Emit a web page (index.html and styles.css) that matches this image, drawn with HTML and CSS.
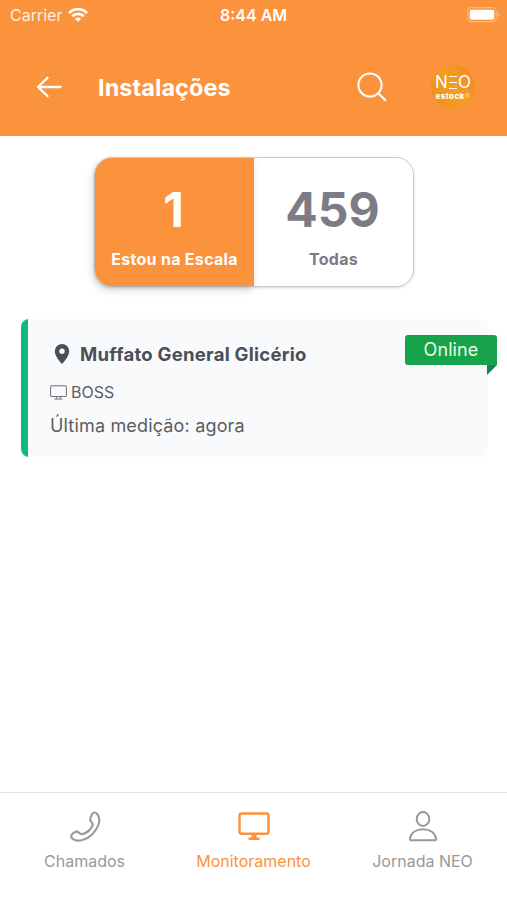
FILE: index.html
```html
<!doctype html>
<html lang="pt-BR">
<head>
  <meta charset="utf-8">
  <title>Instalações</title>
  <link rel="stylesheet" href="styles.css">
</head>
<body>
  <header class="header">
    <div class="status">
      <div class="carrier">
        <span>Carrier</span>
        <svg width="20" height="14" viewBox="0 0 20 14" fill="none" stroke="#fff" stroke-width="2.700">
          <path d="M1 5C6-.1 14-.1 19 5"/>
          <path d="M4.200 8.300c3.300-3.300 8.300-3.300 11.600 0"/>
          <path d="M10 13.800L6.900 10.700c1.700-1.700 4.500-1.700 6.200 0z" fill="#fff" stroke="none"/>
        </svg>
      </div>
      <span class="clock">8:44 AM</span>
      <svg class="battery" width="33" height="16" viewBox="0 0 33 16">
        <rect x=".7" y=".7" width="28.600" height="14" rx="4" fill="none" stroke="#fff" stroke-opacity=".35" stroke-width="1.200"/>
        <rect x="2.700" y="2.700" width="24.600" height="10" rx="2" fill="#fff"/>
        <path d="M31 5.500c1.600.6 1.600 4 0 4.600z" fill="#fff" fill-opacity=".4"/>
      </svg>
    </div>
    <div class="toolbar">
      <svg class="back" width="26" height="22" viewBox="0 0 26 22" fill="none" stroke="#fff" stroke-width="2.300" stroke-linecap="round" stroke-linejoin="round">
        <path d="M24.500 11H2M11.500 1.800L2 11l9.500 9.200"/>
      </svg>
      <h1 class="title">Instalações</h1>
      <svg class="search" width="30" height="30" viewBox="0 0 30 30" fill="none" stroke="#fff" stroke-width="2" stroke-linecap="round">
        <circle cx="13" cy="13" r="11.600"/>
        <path d="M21.300 21.300l7 7" stroke-width="2.300"/>
      </svg>
      <div class="avatar">
        <span class="neo">N<i class="bars"></i>O</span>
        <span class="brand">estock<b class="mark">®</b></span>
      </div>
    </div>
  </header>

  <main class="content">
    <div class="tabs">
      <div class="tab active">
        <span class="count">1</span>
        <span class="label">Estou na Escala</span>
      </div>
      <div class="tab">
        <span class="count">459</span>
        <span class="label">Todas</span>
      </div>
    </div>

    <section class="card">
      <h2 class="place">
        <svg width="16" height="20" viewBox="0 0 16 20">
          <path fill="#495057" fill-rule="evenodd" d="M8 0a7.200 7.200 0 0 1 7.200 7.200C15.200 11 11.600 16.200 8 20 4.400 16.200.8 11 .8 7.200A7.200 7.200 0 0 1 8 0zm0 4.500a2.700 2.700 0 1 0 0 5.400 2.700 2.700 0 0 0 0-5.400z"/>
        </svg>
        <span>Muffato General Glicério</span>
      </h2>
      <p class="device">
        <svg width="17" height="15" viewBox="0 0 17 15" fill="none" stroke="#6c6e72">
          <rect x=".6" y=".8" width="15.800" height="10.700" rx=".5"/>
          <path d="M4.500 14h8M6.500 13.500l.5-2M10.500 13.500l-.5-2"/>
        </svg>
        <span>BOSS</span>
      </p>
      <p class="reading">Última medição: agora</p>
      <span class="badge">Online</span>
    </section>
  </main>

  <nav class="nav">
    <a class="nav-item">
      <svg width="32" height="32" viewBox="0 0 32 32" fill="none" stroke="#999" stroke-width="2.100" stroke-linejoin="round">
        <path d="M23 4.200C24 2.200 26.300 2 28 3.800 30.300 6.500 31 10.500 29.300 15 27 21.500 21 28 13.500 30 9.500 31 5 30.500 3 28.300 1.300 26.500 2.500 24.300 5 22.700 6.800 21.500 8.300 21.200 9.700 22.500 11 23.800 12 24.600 14 24 18.500 22.500 22 19 23.500 15.500 24.400 13.300 23 12.500 21.800 11.300 20.300 9.800 21.500 7.200 23 4.200z"/>
      </svg>
      <span>Chamados</span>
    </a>
    <a class="nav-item current">
      <svg width="32" height="32" viewBox="0 0 32 32">
        <rect x="1.500" y="3.500" width="29" height="20.300" rx="2" fill="none" stroke="#fb923c" stroke-width="2.500"/>
        <path d="M13.500 24h5v3.500h3V30h-11v-2.500h3z" fill="#fb923c"/>
      </svg>
      <span>Monitoramento</span>
    </a>
    <a class="nav-item">
      <svg width="32" height="32" viewBox="0 0 32 32" fill="none" stroke="#999" stroke-width="2" stroke-linejoin="round">
        <ellipse cx="16" cy="9" rx="6.300" ry="6.900"/>
        <path d="M4.200 30.200h23.600c1 0 1.500-.6 1.300-1.500-1-5.700-6-9.400-13.100-9.400S3.900 23 2.900 28.700c-.2.900.3 1.500 1.300 1.500z"/>
      </svg>
      <span>Jornada NEO</span>
    </a>
  </nav>
</body>
</html>
```

FILE: styles.css
```css
* {
  box-sizing: border-box;
}

body {
  background: #fff;
  color: #495057;
  display: flex;
  flex-direction: column;
  font-family: Inter, 'Liberation Sans', sans-serif;
  height: 900px;
  margin: 0;
  width: 507px;
}

h1, h2, p {
  margin: 0;
}

svg {
  display: block;
  flex: none;
}

.header {
  background: #fb923c;
  color: #fff;
  height: 136px;
}

.status {
  align-items: center;
  display: grid;
  font-size: 16px;
  grid-template-columns: 1fr auto 1fr;
  height: 30px;
  padding: 0 7px 0 10px;
}

.carrier {
  align-items: center;
  color: #fff0e0;
  display: flex;
  gap: 6px;
}

.clock {
  font-weight: 600;
  margin-left: -3px;
}

.battery {
  justify-self: end;
  margin-top: -1px;
}

.toolbar {
  align-items: center;
  display: flex;
  height: 114px;
  padding: 0 32px 0 36px;
}

.title {
  flex: 1;
  font-size: 23.5px;
  font-weight: 700;
  letter-spacing: .05px;
  margin-left: 36px;
}

.avatar {
  align-items: center;
  background: linear-gradient(60deg, #ee8a1c, #f39e20 50%, #f3842a);
  border-radius: 50%;
  display: flex;
  flex-direction: column;
  height: 44px;
  margin-left: 44px;
  padding-top: 9px;
  width: 44px;
}

.neo {
  align-items: center;
  display: flex;
  font-size: 17px;
  gap: 1px;
  height: 17px;
  line-height: 17px;
}

.bars {
  border-bottom: 1px solid #fff;
  border-top: 1px solid #fff;
  display: block;
  height: 13px;
  width: 8px;
}

.bars::before {
  border-top: 1px solid #fff;
  content: '';
  display: block;
  margin-top: 5px;
}

.brand {
  font-size: 8px;
  font-weight: 800;
  letter-spacing: .4px;
  line-height: 8px;
  margin-top: 1px;
}

.mark {
  opacity: .5;
}

.content {
  flex: 1;
  padding: 21px 19px 0 21px;
}

.tabs {
  border: 1.5px solid #c9cacd;
  border-radius: 18px;
  box-shadow: 0 1px 3px rgba(0, 0, 0, .16);
  display: flex;
  height: 130px;
  margin-left: 73px;
  width: 320px;
}

.tab {
  align-items: center;
  color: #7c7b87;
  display: flex;
  flex: 1;
  flex-direction: column;
  padding-top: 22px;
}

.tab.active {
  background: #fb923c;
  border-radius: 17px 0 0 17px;
  box-shadow: -2px 4px 8px rgba(0, 0, 0, .16);
  color: #fff;
}

.count {
  font-size: 48px;
  font-weight: 700;
  line-height: 60px;
  margin-left: -2px;
}

.label {
  font-size: 16px;
  font-weight: 700;
  letter-spacing: .3px;
  line-height: 20px;
  margin-top: 9px;
}

.card {
  background: linear-gradient(to right, #10b981 7px, #f9fafc 7px);
  border-radius: 8px;
  height: 138px;
  margin-top: 32px;
  padding: 22px 0 0 29px;
  position: relative;
}

.place {
  align-items: center;
  display: flex;
  font-size: 18.5px;
  font-weight: 700;
  gap: 10px;
  letter-spacing: .27px;
  line-height: 26px;
  padding-left: 4px;
}

.device {
  align-items: center;
  color: #5f6064;
  display: flex;
  font-size: 16px;
  gap: 4px;
  line-height: 22px;
  margin-top: 14px;
}

.reading {
  color: #5c5d61;
  font-size: 18px;
  letter-spacing: .17px;
  line-height: 24px;
  margin-top: 11px;
}

/* ribbon hangs over the right edge of the card */
.badge {
  background: #16a34a;
  border-radius: 3px 3px 0 3px;
  color: #e8fbe9;
  font-size: 18px;
  height: 30px;
  letter-spacing: .1px;
  line-height: 29px;
  position: absolute;
  right: -9px;
  text-align: center;
  top: 16px;
  width: 92px;
}

.badge::after {
  border-right: 10px solid transparent;
  border-top: 10px solid #0e8657;
  content: '';
  position: absolute;
  right: 0;
  top: 30px;
}

.nav {
  border-top: 1px solid #e4e4e5;
  display: flex;
  height: 108px;
  padding-top: 17px;
}

.nav-item {
  align-items: center;
  color: #999;
  display: flex;
  flex: 1;
  flex-direction: column;
  font-size: 16px;
  gap: 9px;
  line-height: 20px;
}

.current {
  color: #fb923c;
}
```
